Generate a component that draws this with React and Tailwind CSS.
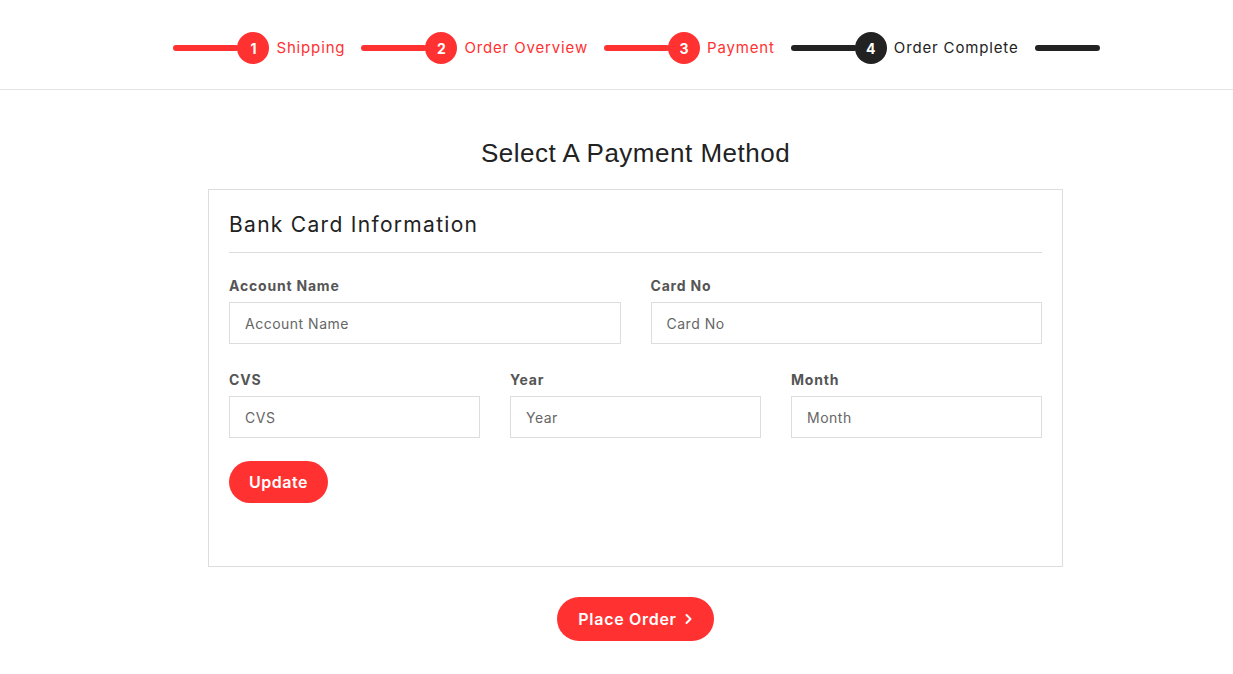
import React from "react";

const steps = [
  { n: 1, label: "Shipping", done: true },
  { n: 2, label: "Order Overview", done: true },
  { n: 3, label: "Payment", done: true },
  { n: 4, label: "Order Complete", done: false },
];

const Field = ({ label, placeholder }) => (
  <div className="flex flex-col">
    <label className="text-[14px] leading-[21px] font-bold tracking-[0.8px] text-[#555] mb-[6px]">{label}</label>
    <input
      className="h-[42px] border border-[#ddd] px-[15px] text-[14px] tracking-[0.5px] text-[#555] placeholder:text-[#666] outline-none"
      placeholder={placeholder}
    />
  </div>
);

export default function App() {
  return (
    <div className="min-h-screen bg-white font-['Inter',sans-serif]">
      {/* stepper */}
      <div className="h-[90px] border-b border-[#e3e3e3] flex items-center justify-center pl-[40px] pt-[7px]">
        {steps.map((s) => (
          <div key={s.n} className="flex items-center mr-[16px]">
            <div className={`w-[66px] h-[6px] rounded-full -mr-[2px] ${s.done ? "bg-[#ff3131]" : "bg-[#222]"}`} />
            <div
              className={`w-8 h-8 rounded-full flex items-center justify-center text-white text-[14px] font-bold ${
                s.done ? "bg-[#ff3131]" : "bg-[#222]"
              }`}
            >
              {s.n}
            </div>
            <span className={`ml-[7px] text-[15px] tracking-[0.85px] ${s.done ? "text-[#ff3131]" : "text-[#222]"}`}>
              {s.label}
            </span>
          </div>
        ))}
        <div className="w-[65px] h-[6px] rounded-full bg-[#222]" />
      </div>

      {/* payment */}
      <div className="flex flex-col items-center pt-[48px] pl-[38px]">
        <h2 className="text-[26px] leading-[30px] text-[#222] tracking-[0.5px] font-['Liberation_Sans',sans-serif]">
          Select A Payment Method
        </h2>
        <div className="mt-[21px] w-[855px] h-[378px] border border-[#ddd] px-[20px] pt-[20px]">
          <h3 className="text-[21px] leading-[30px] text-[#222] tracking-[1.3px] pb-[12px] border-b border-[#ddd]">
            Bank Card Information
          </h3>
          <div className="grid grid-cols-2 gap-x-[30px] mt-[22px]">
            <Field label="Account Name" placeholder="Account Name" />
            <Field label="Card No" placeholder="Card No" />
          </div>
          <div className="grid grid-cols-3 gap-x-[30px] mt-[25px]">
            <Field label="CVS" placeholder="CVS" />
            <Field label="Year" placeholder="Year" />
            <Field label="Month" placeholder="Month" />
          </div>
          <button className="mt-[23px] h-[42px] px-[20px] rounded-full bg-[#ff3131] text-white text-[16px] font-semibold tracking-[0.5px]">
            Update
          </button>
        </div>
        <button className="mt-[30px] h-[44px] px-[21px] rounded-full bg-[#ff3131] text-white text-[16px] font-semibold tracking-[0.7px] flex items-center gap-[7px]">
          Place Order
          <svg width="9" height="12" viewBox="0 0 9 12" fill="none" stroke="white" strokeWidth="2" strokeLinecap="round" strokeLinejoin="round">
            <path d="M2.5 2l4 4-4 4" />
          </svg>
        </button>
      </div>
    </div>
  );
}
